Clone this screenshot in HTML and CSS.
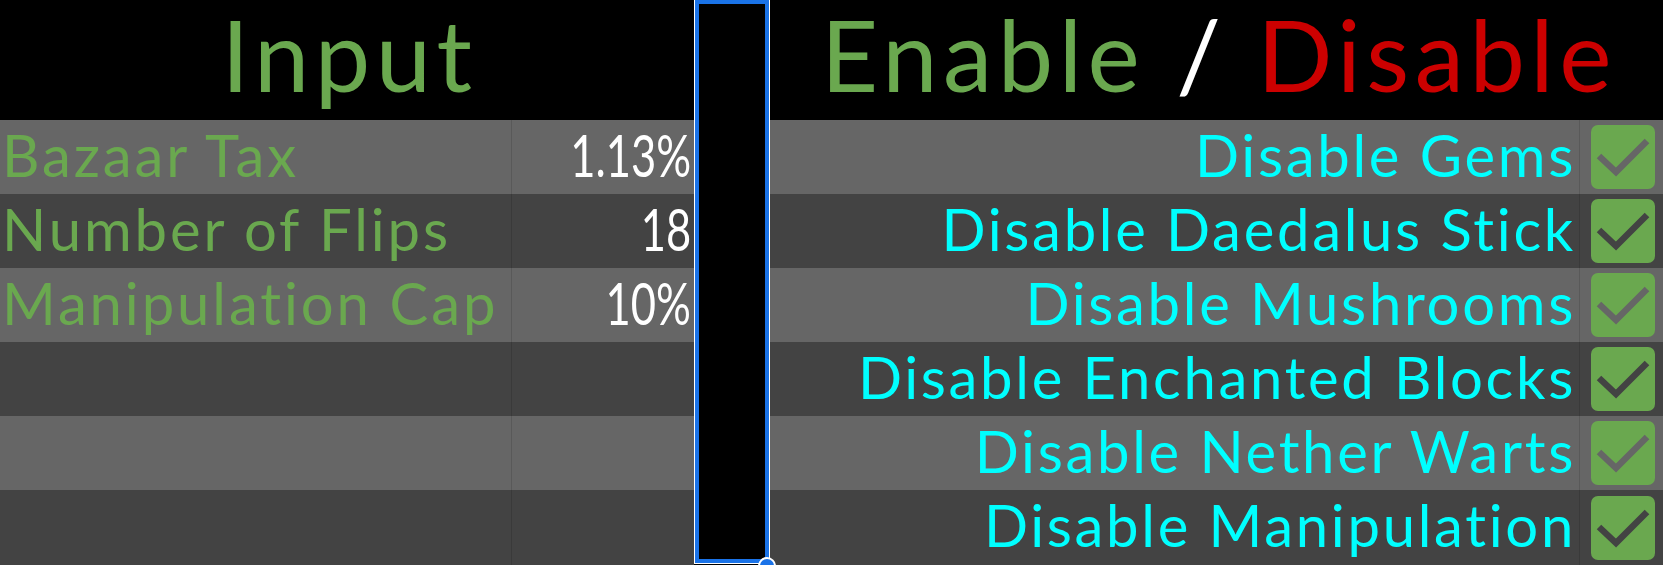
FILE: index.html
```html
<!DOCTYPE html>
<html lang="en">
<head>
<meta charset="utf-8">
<title>Settings</title>
<link rel="stylesheet" href="styles.css">
</head>
<body>
<div class="sheet">
  <section class="table table-left">
    <div class="head"><div class="head-text"><span class="green">Input</span></div></div>
    <div class="row light"><div class="cell label">Bazaar Tax</div><div class="cell value"><span class="num">1.13%</span></div></div>
    <div class="row dark"><div class="cell label">Number of Flips</div><div class="cell value"><span class="num">18</span></div></div>
    <div class="row light"><div class="cell label">Manipulation Cap</div><div class="cell value"><span class="num">10%</span></div></div>
    <div class="row dark"><div class="cell label"></div><div class="cell value"></div></div>
    <div class="row light"><div class="cell label"></div><div class="cell value"></div></div>
    <div class="row dark"><div class="cell label"></div><div class="cell value"></div></div>
  </section>
  <div class="gutter">
    <div class="selection"></div>
    <div class="handle"></div>
  </div>
  <section class="table table-right">
    <div class="head"><div class="head-text"><span class="green">Enable</span> <span class="white">/</span> <span class="red">Disable</span></div></div>
    <div class="row light"><div class="cell option">Disable Gems</div><div class="cell check"><span class="box"><svg viewBox="0 0 64 64"><polyline points="8,31 25,47 56,16"/></svg></span></div></div>
    <div class="row dark"><div class="cell option">Disable Daedalus Stick</div><div class="cell check"><span class="box"><svg viewBox="0 0 64 64"><polyline points="8,31 25,47 56,16"/></svg></span></div></div>
    <div class="row light"><div class="cell option">Disable Mushrooms</div><div class="cell check"><span class="box"><svg viewBox="0 0 64 64"><polyline points="8,31 25,47 56,16"/></svg></span></div></div>
    <div class="row dark"><div class="cell option">Disable Enchanted Blocks</div><div class="cell check"><span class="box"><svg viewBox="0 0 64 64"><polyline points="8,31 25,47 56,16"/></svg></span></div></div>
    <div class="row light"><div class="cell option">Disable Nether Warts</div><div class="cell check"><span class="box"><svg viewBox="0 0 64 64"><polyline points="8,31 25,47 56,16"/></svg></span></div></div>
    <div class="row dark"><div class="cell option">Disable Manipulation</div><div class="cell check"><span class="box"><svg viewBox="0 0 64 64"><polyline points="8,31 25,47 56,16"/></svg></span></div></div>
  </section>
</div>
</body>
</html>
```
FILE: styles.css
```css
html, body {
  margin: 0;
  padding: 0;
  background: #000;
}
body {
  width: 1663px;
  height: 565px;
  overflow: hidden;
  font-family: "Lato", "Open Sans", sans-serif;
}
.sheet {
  display: grid;
  grid-template-columns: 694px 76px 1fr;
  height: 565px;
}
.table {
  display: grid;
  grid-template-rows: 120px repeat(5, 74px) 1fr;
  min-width: 0;
}
.head {
  background: #000;
  text-align: center;
  font-size: 99px;
  white-space: nowrap;
  letter-spacing: 5.5px;
  padding-left: 5px;
}
.head-text {
  line-height: 1.2;
  margin-top: -5px;
}
.green { color: #6aa84f; }
.white { color: #fff; }
.red { color: #cc0000; }
.row {
  display: grid;
  font-size: 58px;
  line-height: 70px;
  white-space: nowrap;
}
.table-left .row { grid-template-columns: 511px 1fr; }
.table-right .row { grid-template-columns: 1fr 84px; }
.light { background: #666666; --check: #666666; }
.dark { background: #434343; --check: #434343; }
.cell { overflow: hidden; }
.label {
  color: #6aa84f;
  padding-left: 2px;
  letter-spacing: 2.9px;
}
.value {
  color: #fff;
  text-align: right;
  padding-right: 3px;
  border-left: 1px solid rgba(0, 0, 0, 0.12);
}
.num {
  display: inline-block;
  transform: scaleX(0.75);
  transform-origin: right center;
}
.option {
  color: #00ffff;
  text-align: right;
  padding-right: 3px;
  letter-spacing: 2.7px;
}
.check {
  border-left: 1px solid rgba(0, 0, 0, 0.12);
  display: flex;
  align-items: center;
  padding-left: 11px;
}
.box {
  width: 64px;
  height: 64px;
  border-radius: 7px;
  background: #6aa84f;
  display: block;
}
.box svg {
  width: 64px;
  height: 64px;
  display: block;
}
.box polyline {
  fill: none;
  stroke: var(--check);
  stroke-width: 6.5;
  stroke-linejoin: miter;
}
.gutter {
  position: relative;
  background: #000;
}
.selection {
  position: absolute;
  left: 1px;
  right: 1px;
  top: 0;
  bottom: 2px;
  border: 4px solid #1a73e8;
  box-shadow: 0 0 0 1px #fff;
}
.handle {
  position: absolute;
  left: 64px;
  top: 557px;
  width: 14px;
  height: 14px;
  border-radius: 50%;
  background: #1a73e8;
  border: 2px solid #fff;
}
```
